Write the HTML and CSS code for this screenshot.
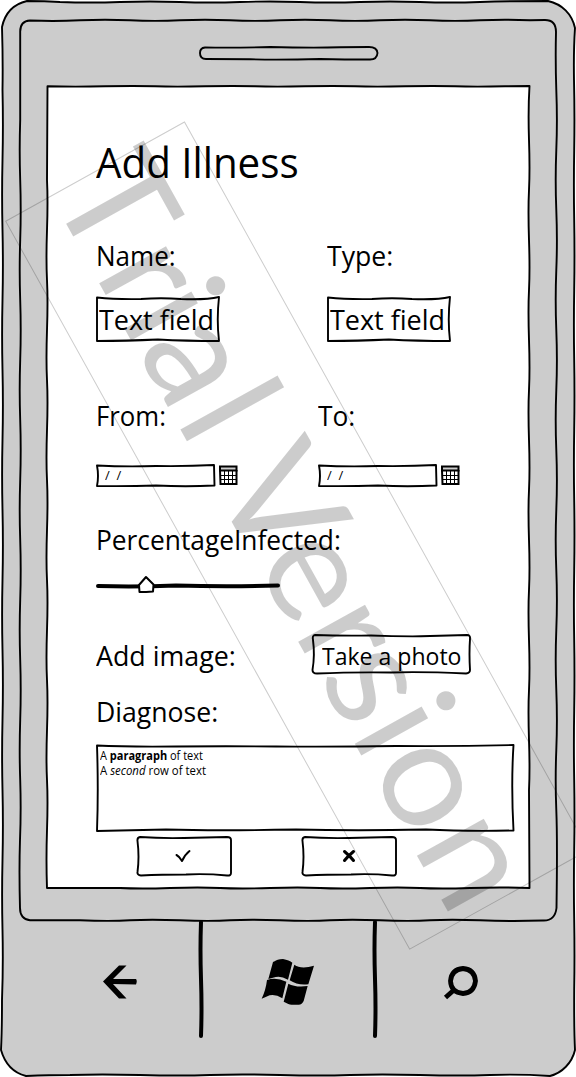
FILE: index.html
```html
<!DOCTYPE html>
<html lang="en">
<head>
<meta charset="utf-8">
<title>Add Illness</title>
<link rel="stylesheet" href="styles.css">
</head>
<body>
<div class="phone">
  <svg class="art ink" viewBox="0 0 576 1077">
    <path class="shell" d="M27 1 Q45 1 60 2 Q90 3 120 2 t60 0 t60 0 t60 0 t60 0 t60 0 t60 0 T548 1 C562 4 572 14 575 28 Q573.500 50 574 80 Q574.800 115 574.200 150 t0 70 t0 70 t0 70 t0 70 t0 70 t0 70 t0 70 t0 70 t0 70 t0 70 t0 70 t0 70 Q574 1030 575 1050 C572 1063 562 1073 550 1076 Q520 1074 490 1075 t-70 0 t-70 0 t-70 0 t-70 0 t-70 0 t-70 0 Q50 1075 26 1076 C14 1073 5 1064 1 1050 Q2 1030 2 1000 Q3.300 965 2.500 930 t0 -70 t0 -70 t0 -70 t0 -70 t0 -70 t0 -70 t0 -70 t0 -70 t0 -70 t0 -70 t0 -70 t0 -70 Q3 60 2 27 C5 13 14 4 27 1Z"/>
    <path d="M30 20.500 Q55 21.500 80 20.300 t50 0 t50 0 t50 0 t50 0 t50 0 t50 0 t50 0 t50 0 t50 0 L545 20 Q556 20 556 32 Q555.300 60 556.300 90 Q557.500 120 556.300 150 t0 60 t0 60 t0 60 t0 60 t0 60 t0 60 t0 60 t0 60 t0 60 t0 60 t0 60 T556.500 908 Q555 921 543 920.500 Q510 921.500 480 920.300 t-50 0 t-50 0 t-50 0 t-50 0 t-50 0 t-50 0 t-50 0 t-50 0 L30 920.300 Q20 919 20 908 Q19 870 20 840 Q21.200 810 20.200 780 t0 -60 t0 -60 t0 -60 t0 -60 t0 -60 t0 -60 t0 -60 t0 -60 t0 -60 t0 -60 t0 -60 L20.200 32 Q20 21 30 20.500Z"/>
    <path d="M205 47.500 Q235 48 270 47 Q310 48 340 47.300 L369 47 Q377 47 377.500 53 Q377 60 369 59.500 Q345 59.500 320 59 Q280 60 250 59.300 L206 59 Q200 59 200 53 Q200 48 205 47.500Z"/>
    <path class="glass" d="M47.500 86.300 Q75 87 105 86.300 t50 0 t50 0 t50 0 t50 0 t50 0 t50 0 t50 0 t50 0 L529.500 86 Q528 110 529 140 t0 50 t0 50 t0 50 t0 50 t0 50 t0 50 t0 50 t0 50 t0 50 t0 50 t0 50 t0 50 t0 50 L529.500 888 Q500 887 470 888 t-50 0 t-50 0 t-50 0 t-50 0 t-50 0 t-50 0 t-50 0 L47 888 Q46 860 47 830 t0 -50 t0 -50 t0 -50 t0 -50 t0 -50 t0 -50 t0 -50 t0 -50 t0 -50 t0 -50 t0 -50 t0 -50 t0 -50 L47.500 86.500Z"/>
  </svg>

  <main class="screen">
    <h1 class="title"><span>Add Illness</span></h1>

    <div class="row labels names">
      <div class="label"><span class="w-name">Name:</span></div>
      <div class="label"><span>Type:</span></div>
    </div>
    <div class="row fields names">
      <div class="field">
        <svg class="ink" width="124" height="46" viewBox="0 0 124 46"><path d="M1 1.500 Q20 3.500 45 3 Q65 1.500 85 3 Q110 4 123 1 Q120.500 24 123 45 Q90 45 62 43.500 Q30 45 1 45Z"/></svg>
        <span>Text field</span>
      </div>
      <div class="field">
        <svg class="ink" width="124" height="46" viewBox="0 0 124 46"><path d="M1 1.500 Q20 3.500 45 3 Q65 1.500 85 3 Q110 4 123 1 Q120.500 24 123 45 Q90 45 62 43.500 Q30 45 1 45Z"/></svg>
        <span>Text field</span>
      </div>
    </div>

    <div class="row labels dates from">
      <div class="label"><span class="w-from">From:</span></div>
      <div class="label"><span class="w-to">To:</span></div>
    </div>
    <div class="row dates pickers">
      <div class="picker">
        <div class="date">
          <svg class="art ink" viewBox="0 0 120 24"><path d="M1 1.500 Q30 3 60 2 Q90 2.500 118 1 L118.500 21.500 Q90 23 60 21.500 Q30 22.500 1 22 Q3 12 1 1.500Z"/></svg>
          <span>/ &nbsp;/</span>
        </div>
        <svg class="calendar" viewBox="0 0 19 20"><path class="lid" d="M1 1.500 L17.500 1.500 V5.500 H1Z"/><path class="sheet" d="M1 5 L1.500 19 H17.500 V5"/><path class="lines" d="M5.500 6V19 M9.500 6V19 M13.500 6V19 M1 10.500H18 M1 14.500H18"/></svg>
      </div>
      <div class="picker">
        <div class="date">
          <svg class="art ink" viewBox="0 0 120 24"><path d="M1 1.500 Q30 3 60 2 Q90 2.500 118 1 L118.500 21.500 Q90 23 60 21.500 Q30 22.500 1 22 Q3 12 1 1.500Z"/></svg>
          <span>/ &nbsp;/</span>
        </div>
        <svg class="calendar" viewBox="0 0 19 20"><path class="lid" d="M1 1.500 L17.500 1.500 V5.500 H1Z"/><path class="sheet" d="M1 5 L1.500 19 H17.500 V5"/><path class="lines" d="M5.500 6V19 M9.500 6V19 M13.500 6V19 M1 10.500H18 M1 14.500H18"/></svg>
      </div>
    </div>

    <div class="label percent"><span class="w-percent">PercentageInfected:</span></div>
    <svg class="slider" viewBox="0 0 186 24">
      <path class="track" d="M2 14 Q40 15 80 13.500 Q130 15 182 13.500"/>
      <path class="thumb" d="M50 5 L57.500 12.500 L57 19.500 Q50 20 43.500 20 L43 13Z"/>
    </svg>

    <div class="row photo">
      <div class="label"><span class="w-image">Add image:</span></div>
      <div class="button take">
        <svg class="art ink" viewBox="0 0 161 42"><path d="M4 2 Q30 3 60 2.500 Q85 3.500 110 3.300 L156 2 Q159.500 2 159 6 Q158 20 159 37 Q159 40 155 40.500 Q110 38.500 80 39.500 Q40 39 6 40.500 Q1.500 40.500 1.500 37 Q4 22 2 7 Q1 2.500 4 2Z"/></svg>
        <span>Take a photo</span>
      </div>
    </div>
    <div class="label diagnose"><span>Diagnose:</span></div>
    <div class="notes">
      <svg class="art ink" viewBox="0 0 420 88"><path d="M1 1.500 Q30 3 80 2.500 Q130 2 180 2.500 Q240 3 300 2 Q360 2.500 417.500 1 Q415 40 417.500 86.500 Q370 87.500 330 85.500 Q260 87 200 85.500 Q120 87 70 85.500 L1 87 Q2.500 45 1 1.500Z"/></svg>
      <p>A <b>paragraph</b> of text</p>
      <p class="second">A <i>second</i> row of text</p>
    </div>
    <div class="row actions">
      <div class="button small">
        <svg class="art ink" viewBox="0 0 96 42"><path d="M4 2 Q25 3.500 48 3 Q70 2.500 91 2 Q95 2 95 5 Q95 20 95 38 Q95 41 91 40.500 Q70 38.500 50 39.500 Q25 39.500 5 40.500 Q1 40 1.500 37 Q3.500 22 1.500 6 Q1 2.500 4 2Z"/></svg>
        <svg class="glyph check" viewBox="0 0 16 14"><path d="M1.500 6 Q4.500 7.500 7 12 Q10 5.500 14.500 2"/></svg>
      </div>
      <div class="button small">
        <svg class="art ink" viewBox="0 0 96 42"><path d="M4 2 Q25 3.500 48 3 Q70 2.500 91 2 Q95 2 95 5 Q95 20 95 38 Q95 41 91 40.500 Q70 38.500 50 39.500 Q25 39.500 5 40.500 Q1 40 1.500 37 Q3.500 22 1.500 6 Q1 2.500 4 2Z"/></svg>
        <svg class="glyph cross" viewBox="0 0 14 14"><path d="M2.500 2.500 Q8 7 11.500 11.500 M11.500 2.500 Q6.500 6.500 2.500 11.500"/></svg>
      </div>
    </div>
  </main>

  <nav class="keys">
    <div class="key"><svg class="back" viewBox="0 0 36 36"><path d="M1 17.500 L17 1.500 H24.500 L11 15 L34 15 Q35.500 17 34 20.500 L11 20 L24.500 34.500 H17Z"/></svg></div>
    <svg class="divider" viewBox="0 0 6 120"><path d="M3 3 Q2 30 3 60 Q4 90 3 117"/></svg>
    <div class="key"><svg class="windows" viewBox="0 0 195 195"><path d="M54 36 L59 34 Q65 28 84 27 Q103 31 112 38 L99 89 Q78 77 62 81 L40 87Z M36 90 Q62 80 94 95 L82 145 Q62 132 44 136 L20 146 Q32 122 36 90Z M118 44 Q138 59 177 47 L160 103 Q128 107 104 91Z M100 101 Q122 113 158 108 L146 153 Q141 164 131 164 L113 164 Q106 165 100 162 L86 155Z"/></svg></div>
    <svg class="divider" viewBox="0 0 6 120"><path d="M3 3 Q2 30 3 60 Q4 90 3 117"/></svg>
    <div class="key"><svg class="search" viewBox="0 0 36 36"><path d="M20 4.500 Q31.500 5.500 32.500 17 Q31 29 20 29.500 Q8 28.500 7.500 17 Q8.500 5.500 20 4.500Z M11.500 25.500 L2.500 33.500"/></svg></div>
  </nav>

  <svg class="art watermark" viewBox="0 0 576 1077">
    <g transform="translate(184.500 122) rotate(60.970)">
      <rect x="0" y="0" width="832.500" height="204.500"/>
      <text y="152.800" x="38.600 116.500 158.300 213.500 273.500 320 379 459 526.500 582 633 697 786">Trial Version</text>
    </g>
  </svg>
</div>
</body>
</html>
```
FILE: styles.css
```css
* { box-sizing: border-box; }
body { margin: 0; background: #fff; color: #000; font-family: "Open Sans", "Noto Sans", sans-serif; }
.phone { position: relative; width: 576px; height: 1077px; padding: 86px 47px 0; overflow: hidden; }
.art { position: absolute; left: 0; top: 0; width: 100%; height: 100%; }
.ink path { fill: none; stroke: #000; stroke-width: 1.9; stroke-linejoin: round; }
.ink .shell { fill: #ccc; }
.ink .glass { fill: #fff; }

.screen { position: relative; display: flex; flex-direction: column; width: 482px; height: 802px; padding: 48px 0 0 49px; }
.row { display: grid; }
.names { grid-template-columns: 231px 124px; }
.dates { grid-template-columns: 222px 150px; }
span { display: inline-block; white-space: nowrap; transform-origin: 0 50%; transform: scaleX(.95); }
.w-name { transform: scaleX(.93); }
.w-from { transform: scaleX(.92); }
.w-to { transform: scaleX(.94); }
.w-percent { transform: scaleX(.94); }
.w-image { transform: scaleX(.957); }

.title { margin: 0; height: 56px; line-height: 56px; font-size: 42.670px; font-weight: 400; }
.title span { transform: scaleX(.945); }
.label { height: 36px; line-height: 36px; font-size: 28px; }
.labels { margin-top: 47px; }
.fields { margin-top: 23px; }
.field { display: grid; width: 124px; height: 46px; font-size: 28px; line-height: 46px; }
.field > * { grid-area: 1 / 1; }
.field span { margin-left: 3px; justify-self: start; transform: scaleX(.963); }
.from { margin-top: 55px; }
.pickers { margin-top: 31px; }
.picker { display: flex; gap: 3px; }
.date { position: relative; width: 120px; height: 24px; padding-left: 9px; font-size: 12px; line-height: 24px; }
.date span { transform: scaleX(1.080); }
.calendar { width: 19px; height: 20px; margin-top: 1px; fill: none; stroke: #000; stroke-width: 2; }
.calendar .lid { fill: #ccc; }
.calendar .lines { stroke-width: 1; }
.percent { margin-top: 33px; }
.slider { width: 186px; height: 24px; margin: 15px 0 0 0; fill: #fff; stroke: #000; stroke-linecap: round; stroke-linejoin: round; }
.slider .track { fill: none; stroke-width: 4; }
.slider .thumb { stroke-width: 2; }
.photo { grid-template-columns: 216px 161px; margin-top: 38px; align-items: center; height: 42px; }
.button { position: relative; display: flex; align-items: center; height: 42px; }
.take { padding-left: 10px; font-size: 24px; }
.take span { transform: scaleX(.960); }
.take .art { left: -1px; top: -1px; }
.diagnose { margin-top: 17px; }
.notes { position: relative; width: 420px; height: 88px; margin-top: 15px; padding: 4px 0 0 4px; font-size: 12px; line-height: 15px; }
.notes p { position: relative; margin: 0; white-space: nowrap; transform-origin: 0 50%; width: max-content; transform: scaleX(.917); }
.notes .second { transform: scaleX(.95); }
.actions { grid-template-columns: 96px 96px; column-gap: 69px; margin: 3px 0 0 40px; }
.small { justify-content: center; }
.glyph { fill: none; stroke: #000; stroke-linecap: round; stroke-linejoin: round; }
.check { width: 16px; height: 14px; margin-right: 2px; stroke-width: 2; }
.cross { width: 14px; height: 14px; stroke-width: 3; }

.keys { position: relative; display: flex; align-items: flex-start; margin-top: 31px; height: 126px; }
.key { display: flex; align-items: center; justify-content: center; width: 168px; height: 126px; }
.key:first-child, .key:last-child { width: 151px; }
.divider { width: 6px; height: 120px; fill: none; stroke: #000; stroke-width: 4; stroke-linecap: round; }
.back { width: 36px; height: 36px; margin-right: 6px; }
.windows { width: 65px; height: 65px; margin-right: 2px; }
.search { width: 36px; height: 36px; margin-left: 14px; fill: none; stroke: #000; stroke-width: 4.800px; }

.watermark rect { fill: none; stroke: rgba(0, 0, 0, .2); stroke-width: 1; }
.watermark text { fill: rgba(0, 0, 0, .2); font-family: Lato, "Open Sans", sans-serif; font-size: 151px; text-anchor: middle; }
```
